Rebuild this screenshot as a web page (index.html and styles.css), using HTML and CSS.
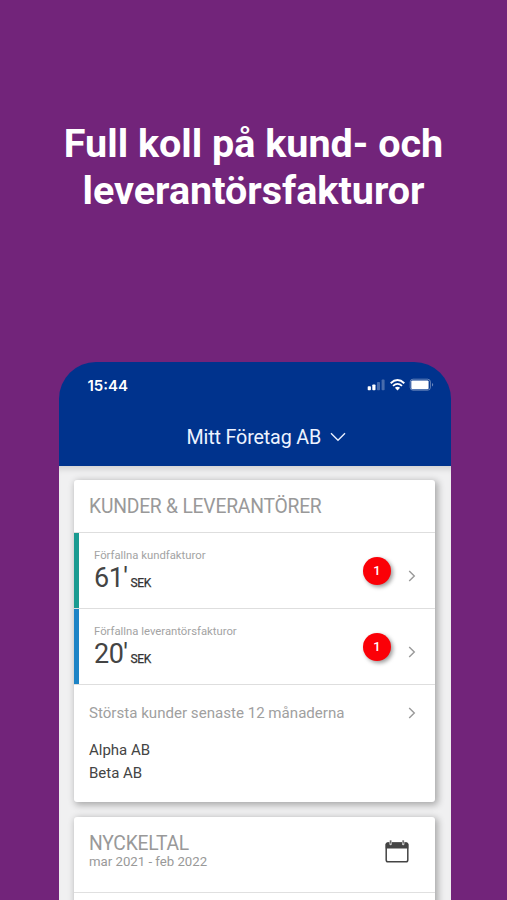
FILE: index.html
```html
<!DOCTYPE html>
<html lang="sv">
<head>
<meta charset="utf-8">
<title>Mitt Företag AB</title>
<link rel="stylesheet" href="styles.css">
</head>
<body>
<h1 class="headline">Full koll på kund- och<br>leverantörsfakturor</h1>
<main class="phone">
  <header class="topbar">
    <div class="status">
      <span class="time">15:44</span>
      <svg class="status-icons" width="68" height="14" viewBox="0 0 68 14">
        <g fill="#fff">
          <rect x="0.7" y="8.3" width="3.2" height="3.9" rx=".8"/>
          <rect x="5.3" y="6.4" width="3.2" height="5.8" rx=".8"/>
          <rect x="10" y="4" width="3" height="8.2" rx=".8" opacity=".28"/>
          <rect x="14.6" y="1.6" width="3" height="10.6" rx=".8" opacity=".28"/>
          <path d="M30.5 12.4 L27.9 9.8 Q30.5 7.7 33.1 9.8Z"/>
          <rect x="44.3" y="2.4" width="17.3" height="8.8" rx="1.2"/>
          <path d="M65 5 q2.4 1.7 0 3.6z" opacity=".4"/>
        </g>
        <g fill="none" stroke="#fff">
          <path d="M23.7 5.2 Q30.5 -1.1 37.3 5.2" stroke-width="1.9"/>
          <path d="M26 7.9 Q30.5 3.8 35 7.9" stroke-width="1.8"/>
          <rect x="43.2" y="1.2" width="20.2" height="11" rx="2.8" opacity=".38"/>
        </g>
      </svg>
    </div>
    <div class="company">
      <span class="company-name">Mitt Företag AB</span>
      <svg width="16" height="10" viewBox="0 0 16 10"><path d="M1 1.2 L8 8.2 L15 1.2" fill="none" stroke="#e9f0ff" stroke-width="1.4"/></svg>
    </div>
  </header>
  <div class="content">
    <section class="card card-main">
      <h2 class="card-title">KUNDER &amp; LEVERANTÖRER</h2>
      <div class="entry teal">
        <div class="figures">
          <div class="label">Förfallna kundfakturor</div>
          <div class="amount">61'<span class="unit">SEK</span></div>
        </div>
        <span class="badge">1</span>
        <svg class="chevron" width="8" height="12" viewBox="0 0 8 12"><path d="M1.2 .9 L6.3 6 L1.2 11.1"/></svg>
      </div>
      <div class="entry blue">
        <div class="figures">
          <div class="label">Förfallna leverantörsfakturor</div>
          <div class="amount">20'<span class="unit">SEK</span></div>
        </div>
        <span class="badge">1</span>
        <svg class="chevron" width="8" height="12" viewBox="0 0 8 12"><path d="M1.2 .9 L6.3 6 L1.2 11.1"/></svg>
      </div>
      <div class="customers">
        <div class="customers-head">
          <span class="customers-title">Största kunder senaste 12 månaderna</span>
          <svg class="chevron" width="8" height="12" viewBox="0 0 8 12"><path d="M1.2 .9 L6.3 6 L1.2 11.1"/></svg>
        </div>
        <ul class="names">
          <li>Alpha AB</li>
          <li>Beta AB</li>
        </ul>
      </div>
    </section>
    <section class="card card-key">
      <div class="key-head">
        <div>
          <h2 class="key-title">NYCKELTAL</h2>
          <div class="period">mar 2021 - feb 2022</div>
        </div>
        <svg class="calendar" width="24" height="23" viewBox="0 0 24 23">
          <path d="M2.8 2.5 H21.2 Q23.3 2.5 23.3 4.6 V8.6 H.7 V4.6 Q.7 2.5 2.8 2.5Z" fill="#444"/>
          <rect x="1.2" y="3" width="21.6" height="18.8" rx="1.8" fill="none" stroke="#444" stroke-width="1.5"/>
          <path d="M5.6 1 V4 M18.2 1 V4" stroke="#ccc" stroke-width="2.4" stroke-linecap="round"/>
          <path d="M5.6 .6 V3.6 M18.2 .6 V3.6" stroke="#666" stroke-width="1.3"/>
        </svg>
      </div>
    </section>
  </div>
</main>
</body>
</html>
```

FILE: styles.css
```css
* { box-sizing: border-box; }

body {
  margin: 0;
  height: 900px;
  overflow: hidden;
  background: #72247a;
  font-family: Roboto, "Liberation Sans", sans-serif;
  display: flex;
  flex-direction: column;
}

svg { display: block; flex: none; }

.headline {
  margin: 0;
  padding-top: 120px;
  height: 362px;
  flex: none;
  color: #fff;
  font-size: 39.5px;
  font-weight: 700;
  line-height: 47px;
  text-align: center;
  white-space: nowrap;
}

.phone {
  width: 391.5px;
  height: 538px;
  margin-left: 59px;
  flex: none;
  overflow: hidden;
  display: flex;
  flex-direction: column;
}

.topbar {
  height: 104px;
  flex: none;
  border-radius: 37px 37px 0 0;
  background: #00338d;
  color: #fff;
}

.status {
  display: flex;
  justify-content: space-between;
  padding: 15px 15.5px 0 28.5px;
  height: 62px;
}

.time {
  font-family: Inter, sans-serif;
  font-size: 15px;
  font-weight: 600;
  line-height: 18px;
}

.status-icons { margin-top: 1px; }

.company {
  display: flex;
  align-items: center;
  gap: 9px;
  padding-left: 127.5px;
  height: 26px;
}

.company-name {
  padding-top: 1px;
  color: #edf3ff;
  font-size: 19.7px;
  letter-spacing: -.14px;
  line-height: 26px;
}

.content {
  flex: 1;
  padding: 13.5px 15.5px 0 15px;
  display: flex;
  flex-direction: column;
  gap: 15px;
  background: #f0f0f1;
  box-shadow: inset 0 7px 6px -4px #0002;
}

.card {
  flex: none;
  background: #fff;
  border-radius: 3px;
  box-shadow: 2px 2px 7px 1px #0000004d;
}

.card-main { height: 322px; }
.card-key { height: 110px; }

.card-title,
.key-title {
  margin: 0;
  color: #999;
  font-weight: 400;
  font-size: 19.3px;
  letter-spacing: -.22px;
}

.card-title {
  height: 52px;
  padding-left: 15px;
  line-height: 53px;
}

.entry {
  height: 76px;
  display: flex;
  padding-left: 20px;
  border-top: 1.5px solid #dedede;
  background: linear-gradient(to right, var(--accent) 5px, #fff 5px) border-box;
}

.teal { --accent: #1a9b91; }
.blue { --accent: #1d84c6; }

.figures { flex: 1; padding-top: 15px; }

.label {
  color: #a3a3a3;
  font-size: 11.3px;
  line-height: 16px;
}

.amount {
  color: #444;
  font-size: 27px;
  letter-spacing: -.5px;
  line-height: 28px;
}

.unit {
  margin-left: 3px;
  color: #333;
  font-size: 12px;
  font-weight: 400;
  -webkit-text-stroke: .25px #333;
  letter-spacing: -.4px;
}

.badge {
  width: 28px;
  height: 28px;
  margin: 24px 16.5px 0 0;
  border-radius: 50%;
  background: #fb0007;
  box-shadow: 2px 2px 4px #0006;
  color: #fff;
  font-size: 13px;
  font-weight: 500;
  line-height: 28px;
  text-align: center;
}

.chevron {
  margin-right: 19.5px;
  fill: none;
  stroke: #999;
  stroke-width: 1.4;
}

.entry .chevron { margin-top: 37px; }

.customers {
  height: 118px;
  border-top: 1.5px solid #dedede;
  padding: 18px 0 0 15px;
}

.customers-head {
  display: flex;
  align-items: center;
  justify-content: space-between;
  height: 20px;
}

.customers-title {
  color: #a0a0a0;
  font-size: 15.1px;
  line-height: 20px;
}

.names {
  list-style: none;
  margin: 16.5px 0 0;
  padding: 0;
  color: #444;
  font-size: 15px;
  line-height: 23px;
}

.key-head {
  display: flex;
  justify-content: space-between;
  height: 76px;
  padding: 16px 26px 0 15px;
  border-bottom: 1.5px solid #e0e0e0;
}

.key-title { line-height: 22px; }

.period {
  color: #999;
  font-size: 13.2px;
  line-height: 14px;
}

.calendar { margin-top: 7px; }
```
